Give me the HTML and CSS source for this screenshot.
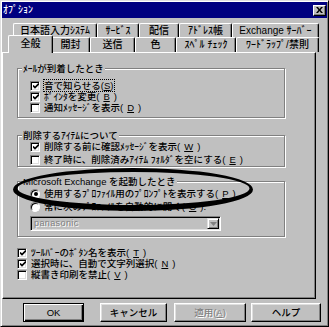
FILE: index.html
```html
<!DOCTYPE html>
<html lang="ja">

<head>
    <meta charset="UTF-8">
    <title>オプション</title>
    <link rel="stylesheet" href="styles.css">
</head>

<body>
    <div class="window">
        <div class="titlebar">
            <span class="title">ｵﾌﾟｼｮﾝ</span>
            <span class="close">
                <svg width="7" height="6" viewBox="0 0 7 6">
                    <path d="M0 0h2l1.5 2 1.5-2h2l-2.5 3 2.5 3h-2l-1.5-2-1.5 2h-2l2.5-3z" fill="#000" />
                </svg>
            </span>
        </div>

        <div class="tabs">
            <ul class="tabrow back">
                <li>日本語入力ｼｽﾃﾑ</li>
                <li>ｻｰﾋﾞｽ</li>
                <li>配信</li>
                <li>ｱﾄﾞﾚｽ帳</li>
                <li>Exchange ｻｰﾊﾞｰ</li>
            </ul>
            <ul class="tabrow front">
                <li class="active">全般</li>
                <li>開封</li>
                <li>送信</li>
                <li>色</li>
                <li>ｽﾍﾟﾙ ﾁｪｯｸ</li>
                <li>ﾜｰﾄﾞﾗｯﾌﾟ/禁則</li>
            </ul>
        </div>

        <div class="panel">
            <!-- メール到着 -->
            <div class="group g-mail">
                <div class="legend">ﾒｰﾙが到着したとき</div>
                <div class="row"><span class="check on"></span><span class="focus">音で知らせる(<u>S</u>)</span></div>
                <div class="row"><span class="check on"></span>ﾎﾟｲﾝﾀを変更(<u>B</u>)</div>
                <div class="row"><span class="check"></span>通知ﾒｯｾｰｼﾞを表示(<u>D</u>)</div>
            </div>

            <!-- 削除 -->
            <div class="group g-delete">
                <div class="legend">削除するｱｲﾃﾑについて</div>
                <div class="row"><span class="check on"></span>削除する前に確認ﾒｯｾｰｼﾞを表示(<u>W</u>)</div>
                <div class="row"><span class="check"></span>終了時に、削除済みｱｲﾃﾑ ﾌｫﾙﾀﾞを空にする(<u>E</u>)</div>
            </div>

            <!-- 起動 -->
            <div class="group g-start">
                <div class="legend">Microsoft Exchange を起動したとき</div>
                <div class="row"><span class="radio on"></span>使用するﾌﾟﾛﾌｧｲﾙ用のﾌﾟﾛﾝﾌﾟﾄを表示する(<u>P</u>)</div>
                <div class="row"><span class="radio"></span>常に次のﾌﾟﾛﾌｧｲﾙを自動的に開く(<u>O</u>):</div>
                <div class="combo">
                    <span class="value">panasonic</span>
                    <span class="drop">
                        <svg width="7" height="4" viewBox="0 0 7 4">
                            <path d="M0 0h7l-3.5 4z" fill="#808080" />
                        </svg>
                    </span>
                </div>
            </div>

            <div class="misc">
                <div class="row"><span class="check on"></span>ﾂｰﾙﾊﾞｰのﾎﾞﾀﾝ名を表示(<u>T</u>)</div>
                <div class="row"><span class="check on"></span>選択時に、自動で文字列選択(<u>N</u>)</div>
                <div class="row"><span class="check"></span>縦書き印刷を禁止(<u>V</u>)</div>
            </div>
        </div>

        <div class="buttons">
            <button class="btn ok default">OK</button>
            <button class="btn cancel">キャンセル</button>
            <button class="btn apply" disabled>適用(<u>A</u>)</button>
            <button class="btn help">ヘルプ</button>
        </div>

        <!-- 手書きの丸印（下側を太く） -->
        <svg class="mark" width="329" height="327" viewBox="0 0 329 327">
            <path fill="#000" fill-rule="evenodd"
                d="M12 188.5a120 21.5 0 1 0 240 0a120 21.5 0 1 0 -240 0z
                   M16.5 187.5a116 16.5 0 1 0 232 0a116 16.5 0 1 0 -232 0z" />
        </svg>
    </div>
</body>

</html>
```

FILE: styles.css
```css
* {
    margin: 0;
    padding: 0;
    box-sizing: border-box;
    list-style: none;
}

body {
    width: 329px;
    height: 327px;
    overflow: hidden;
    background: #c0c0c0;
    font-family: "Liberation Sans", "Noto Sans CJK JP", sans-serif;
    font-size: 9.5px;
    font-weight: 500;
    color: #000;
    text-autospace: no-autospace;
    line-height: 11px;
}

u {
    text-decoration: underline;
    text-underline-offset: 1px;
}

.window {
    position: relative;
    width: 329px;
    height: 327px;
    padding: 1px;
    background: #c0c0c0;
    border: 1px solid;
    border-color: #dfdfdf #000 #000 #dfdfdf;
    box-shadow: inset 1px 1px #fff, inset -1px -1px #808080;
}

/* タイトルバー */
.titlebar {
    height: 16px;
    display: flex;
    align-items: center;
    justify-content: space-between;
    padding: 0 1px 0 1px;
    background: #000080;
    color: #fff;
}

.titlebar .title {
    font-size: 10px;
    line-height: 12px;
}

.titlebar .close {
    width: 13px;
    height: 11px;
    display: flex;
    align-items: center;
    justify-content: center;
    background: #c0c0c0;
    border: 1px solid;
    border-color: #fff #000 #000 #fff;
    box-shadow: inset -1px -1px #808080;
}

/* タブ */
.tabs {
    padding: 5px 0 0 5px;
}

.tabrow {
    display: flex;
}

.tabrow li {
    display: flex;
    align-items: center;
    justify-content: center;
    font-size: 10px;
    line-height: 12px;
    white-space: nowrap;
    background: #c0c0c0;
    border-top: 1px solid #fff;
    border-left: 1px solid #fff;
    border-right: 1px solid #000;
    border-radius: 2px 2px 0 0;
    box-shadow: inset -1px 0 #808080;
}

.tabrow.back {
    margin-left: 6px;
}

.tabrow.back li {
    height: 14px;
}

.tabrow.back li:nth-child(1) { width: 84px; }
.tabrow.back li:nth-child(2) { width: 42px; }
.tabrow.back li:nth-child(3) { width: 40px; }
.tabrow.back li:nth-child(4) { width: 53px; }
.tabrow.back li:nth-child(5) { width: 87px; }

.tabrow.front {
    margin-left: 3px;
}

.tabrow.front li {
    height: 15px;
}

.tabrow.front li:nth-child(1) { width: 41px; }
.tabrow.front li:nth-child(2) { width: 39px; }
.tabrow.front li:nth-child(3) { width: 45px; }
.tabrow.front li:nth-child(4) { width: 41px; }
.tabrow.front li:nth-child(5) { width: 60px; }
.tabrow.front li:nth-child(6) { width: 83px; }

.tabrow.front li.active {
    z-index: 1;
    width: 45px;
    height: 18px;
    margin: -2px -2px -1px -2px;
    padding-bottom: 1px;
}

/* パネル */
.panel {
    width: 314px;
    height: 247px;
    padding: 0 0 0 14px;
    border: 1px solid;
    border-color: #fff #000 #000 #fff;
    box-shadow: inset -1px -1px #808080;
}

.group {
    width: 268px;
    padding: 0 0 0 12px;
    border: 1px solid #808080;
    box-shadow: inset 1px 1px #fff, 1px 1px #fff;
}

.legend {
    width: fit-content;
    height: 11px;
    line-height: 11px;
    margin: -6px 0 0 -8px;
    padding: 0 1px;
    background: #c0c0c0;
    white-space: nowrap;
}

.g-mail {
    margin-top: 15px;
    padding-bottom: 4px;
}

.g-mail .legend {
    margin-bottom: 6px;
}

.g-delete {
    margin-top: 17px;
}

.g-delete .legend {
    margin-bottom: -1px;
}

.g-delete .row,
.g-start .row {
    height: 13px;
}

.g-start {
    margin-top: 14px;
    padding-bottom: 5px;
}

.misc {
    margin-top: 10px;
}

.row {
    height: 11px;
    display: flex;
    align-items: center;
    gap: 4px;
    line-height: 11px;
    white-space: nowrap;
}

.focus {
    outline: 1px dotted #000;
    outline-offset: 0;
}

/* チェックボックス */
.check {
    width: 10px;
    height: 10px;
    flex: none;
    display: flex;
    align-items: center;
    justify-content: center;
    background: #fff;
    border: 1px solid;
    border-color: #808080 #fff #fff #808080;
    box-shadow: inset 1px 1px #000, inset -1px -1px #dfdfdf;
}

.check.on::after {
    content: "";
    width: 6px;
    height: 6px;
    margin: 1px 0 0 1px;
    background: url("data:image/svg+xml,%3Csvg xmlns='http://www.w3.org/2000/svg' viewBox='0 0 6 6'%3E%3Cpath d='M0 2.6l2 2 4-4' fill='none' stroke='%23000' stroke-width='1.8'/%3E%3C/svg%3E") no-repeat center / 6px 6px;
}

/* ラジオボタン */
.radio {
    width: 10px;
    height: 10px;
    flex: none;
    display: flex;
    align-items: center;
    justify-content: center;
    background: #fff;
    border: 1px solid;
    border-color: #808080 #fff #fff #808080;
    border-radius: 50%;
    box-shadow: inset 1px 1px #000;
}

.radio.on::after {
    content: "";
    width: 4px;
    height: 4px;
    margin: 1px 0 0 1px;
    border-radius: 50%;
    background: #000;
}

/* コンボボックス（無効） */
.combo {
    width: 191px;
    height: 15px;
    margin-top: 3px;
    display: flex;
    align-items: center;
    justify-content: space-between;
    padding: 0 1px 0 3px;
    border: 1px solid;
    border-color: #808080 #fff #fff #808080;
    box-shadow: inset 1px 1px #000, inset -1px -1px #dfdfdf;
}

.combo .value {
    color: #808080;
    text-shadow: 1px 1px #fff;
    font-weight: 400;
    font-size: 9px;
    letter-spacing: 0.4px;
}

.combo .drop {
    width: 12px;
    height: 11px;
    display: flex;
    align-items: center;
    justify-content: center;
    border: 1px solid;
    border-color: #dfdfdf #000 #000 #dfdfdf;
    box-shadow: inset 1px 1px #fff, inset -1px -1px #808080;
    background: #c0c0c0;
}

/* ボタン */
.buttons {
    display: flex;
    margin-top: 4px;
    padding-left: 21px;
}

.btn {
    height: 19px;
    font-family: inherit;
    font-size: 9.5px;
    font-weight: 500;
    line-height: 11px;
    color: #000;
    background: #c0c0c0;
    border: 1px solid;
    border-color: #fff #000 #000 #fff;
    box-shadow: inset -1px -1px #808080, inset 1px 1px #dfdfdf;
}

.btn.default {
    border-color: #000;
    box-shadow: inset 1px 1px #fff, inset -1px -1px #000, inset -2px -2px #808080;
}

.btn.ok { width: 61px; margin-right: 16px; }
.btn.cancel { width: 67px; margin-right: 7px; }
.btn.apply { width: 72px; margin-right: 5px; }
.btn.help { width: 70px; }

.btn:disabled {
    color: #808080;
    text-shadow: 1px 1px #fff;
}

/* 丸印 */
.mark {
    position: absolute;
    top: 0;
    left: 0;
    pointer-events: none;
}
```
